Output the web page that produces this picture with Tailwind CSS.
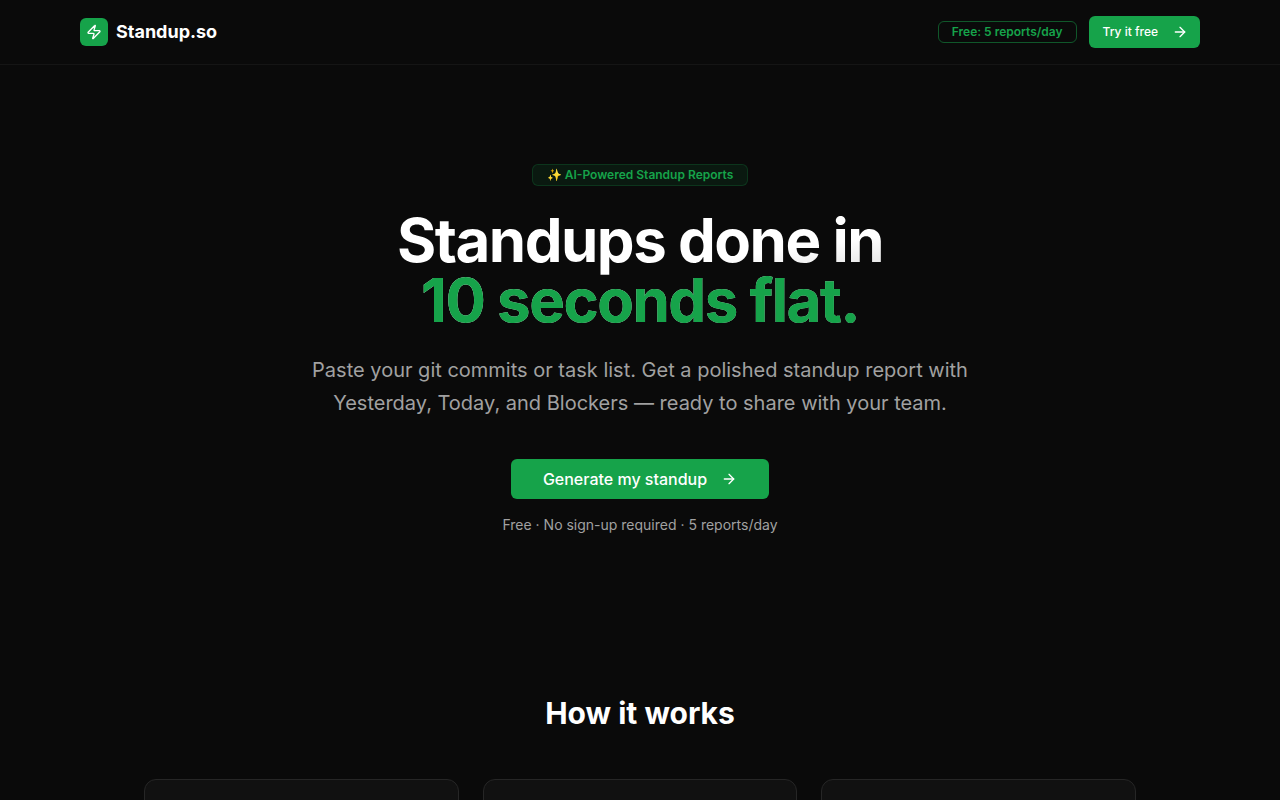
<!doctype html>
<html lang="en">
  <head>
    <meta charset="UTF-8" />
    <meta name="viewport" content="width=device-width, initial-scale=1.0" />
    <title>Standup.so</title>
    <script src="https://cdn.jsdelivr.net/npm/@tailwindcss/browser@4"></script>
  </head>
  <body class="min-h-screen bg-[#0a0a0a] font-['Inter',sans-serif] text-white">
    <!-- Header -->
    <header class="border-b border-[#151515]">
      <div class="max-w-6xl mx-auto px-4 h-16 flex items-center justify-between">
        <a href="#" class="flex items-center gap-2">
          <span class="w-7 h-7 rounded-md bg-[#16a34a] flex items-center justify-center">
            <svg
              class="w-4 h-4"
              aria-hidden="true"
              viewBox="0 0 24 24"
              fill="none"
              stroke="currentColor"
              stroke-width="2"
              stroke-linecap="round"
              stroke-linejoin="round"
            >
              <path
                d="M4 14a1 1 0 0 1-.78-1.63l9.9-10.2a.5.5 0 0 1 .86.46l-1.92 6.02A1 1 0 0 0 13 10h7a1 1 0 0 1 .78 1.63l-9.9 10.2a.5.5 0 0 1-.86-.46l1.92-6.02A1 1 0 0 0 11 14z"
              />
            </svg>
          </span>
          <span class="text-lg font-bold">Standup.so</span>
        </a>
        <div class="flex items-center gap-3">
          <span
            class="rounded-md border border-[#16a34a]/50 px-[13px] py-0.5 text-xs font-semibold text-[#16a34a]"
            >Free: 5 reports/day</span
          >
          <button
            type="button"
            class="h-8 rounded-md bg-[#16a34a] hover:bg-[#15803d] pl-3.5 pr-3 flex items-center gap-3.5 text-xs font-medium"
          >
            Try it free
            <svg
              class="w-4 h-4"
              aria-hidden="true"
              viewBox="0 0 24 24"
              fill="none"
              stroke="currentColor"
              stroke-width="2"
              stroke-linecap="round"
              stroke-linejoin="round"
            >
              <path d="M5 12h14" />
              <path d="m12 5 7 7-7 7" />
            </svg>
          </button>
        </div>
      </div>
    </header>

    <main>
      <!-- Hero -->
      <section class="max-w-4xl mx-auto px-4 py-24 text-center">
        <div
          class="inline-flex items-center rounded-md border border-[#16a34a]/20 bg-[#16a34a]/10 px-3.5 py-0.5 mb-6 text-xs font-semibold text-[#16a34a]"
        >
          ✨ AI-Powered Standup Reports
        </div>
        <h1
          class="mb-6 text-6xl leading-none font-bold tracking-tight bg-linear-to-br from-white from-50% to-white/60 bg-clip-text text-transparent"
        >
          Standups done in<br />
          <span class="text-[#16a34a]">10 seconds flat.</span>
        </h1>
        <p class="max-w-2xl mx-auto mb-10 text-xl leading-relaxed text-[#a1a1a1]">
          Paste your git commits or task list. Get a polished standup report with Yesterday, Today,
          and Blockers — ready to share with your team.
        </p>
        <button
          type="button"
          class="h-10 mx-auto rounded-md bg-[#16a34a] hover:bg-[#15803d] px-8 flex items-center gap-3.5 text-base font-medium"
        >
          Generate my standup
          <svg
            class="w-4 h-4"
            aria-hidden="true"
            viewBox="0 0 24 24"
            fill="none"
            stroke="currentColor"
            stroke-width="2"
            stroke-linecap="round"
            stroke-linejoin="round"
          >
            <path d="M5 12h14" />
            <path d="m12 5 7 7-7 7" />
          </svg>
        </button>
        <p class="mt-4 text-sm text-[#a1a1a1]">Free · No sign-up required · 5 reports/day</p>
      </section>

      <!-- How it works -->
      <section class="max-w-5xl mx-auto px-4 py-16">
        <h2 class="mb-12 text-3xl font-bold text-center">How it works</h2>
        <div class="grid grid-cols-3 gap-6">
          <div class="min-h-48 rounded-xl border border-[#262626] bg-[#111111]"></div>
          <div class="min-h-48 rounded-xl border border-[#262626] bg-[#111111]"></div>
          <div class="min-h-48 rounded-xl border border-[#262626] bg-[#111111]"></div>
        </div>
      </section>
    </main>
  </body>
</html>
